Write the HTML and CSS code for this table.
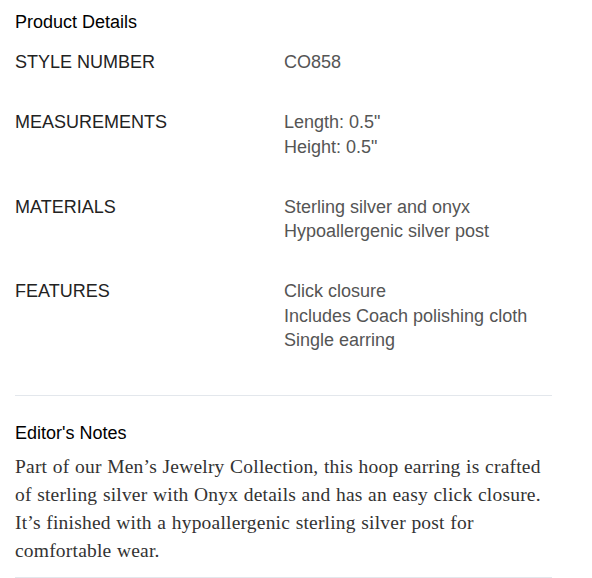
FILE: index.html
```html
<!DOCTYPE html>
<html>
<head>
<meta charset="utf-8">
<link rel="stylesheet" href="styles.css">
</head>
<body>
<div class="details">
  <h2 class="title">Product Details</h2>
  <dl class="specs">
    <div class="row">
      <dt class="label">STYLE NUMBER</dt>
      <dd class="value">CO858</dd>
    </div>
    <div class="row">
      <dt class="label">MEASUREMENTS</dt>
      <dd class="value">Length: 0.5"<br>Height: 0.5"</dd>
    </div>
    <div class="row">
      <dt class="label">MATERIALS</dt>
      <dd class="value">Sterling silver and onyx<br>Hypoallergenic silver post</dd>
    </div>
    <div class="row">
      <dt class="label">FEATURES</dt>
      <dd class="value">Click closure<br>Includes Coach polishing cloth<br>Single earring</dd>
    </div>
  </dl>
  <div class="notes">
    <h2 class="notes-title">Editor's Notes</h2>
    <p class="notes-text">Part of our Men’s Jewelry Collection, this hoop earring is crafted of sterling silver with Onyx details and has an easy click closure. It’s finished with a hypoallergenic sterling silver post for comfortable wear.</p>
  </div>
</div>
</body>
</html>
```
FILE: styles.css
```css
html, body {
  margin: 0;
  padding: 0;
  background: #fff;
}
body {
  font-family: "Liberation Sans", Arial, sans-serif;
}
.details {
  width: 537px;
  margin-left: 15px;
  padding-top: 10px;
}
.title {
  margin: 0 0 16px;
  font-size: 18px;
  font-weight: normal;
  line-height: 24px;
  color: #000;
}
.specs {
  margin: 0;
  padding-bottom: 7px;
  border-bottom: 1px solid #e3e7ec;
}
.row {
  display: grid;
  grid-template-columns: 269px 1fr;
  margin-bottom: 35.5px;
}
.label, .value {
  margin: 0;
  font-size: 18px;
  line-height: 24.5px;
}
.label {
  color: #222;
}
.value {
  color: #555;
}
.notes {
  padding-top: 25px;
  padding-bottom: 12px;
  border-bottom: 1px solid #e3e7ec;
}
.notes-title {
  margin: 0 0 8px;
  font-size: 18px;
  font-weight: normal;
  line-height: 24px;
  color: #000;
}
.notes-text {
  margin: 0;
  font-family: "Liberation Serif", "Times New Roman", serif;
  font-size: 19.5px;
  letter-spacing: 0.2px;
  word-spacing: 0.5px;
  line-height: 28px;
  color: #333;
}
```
